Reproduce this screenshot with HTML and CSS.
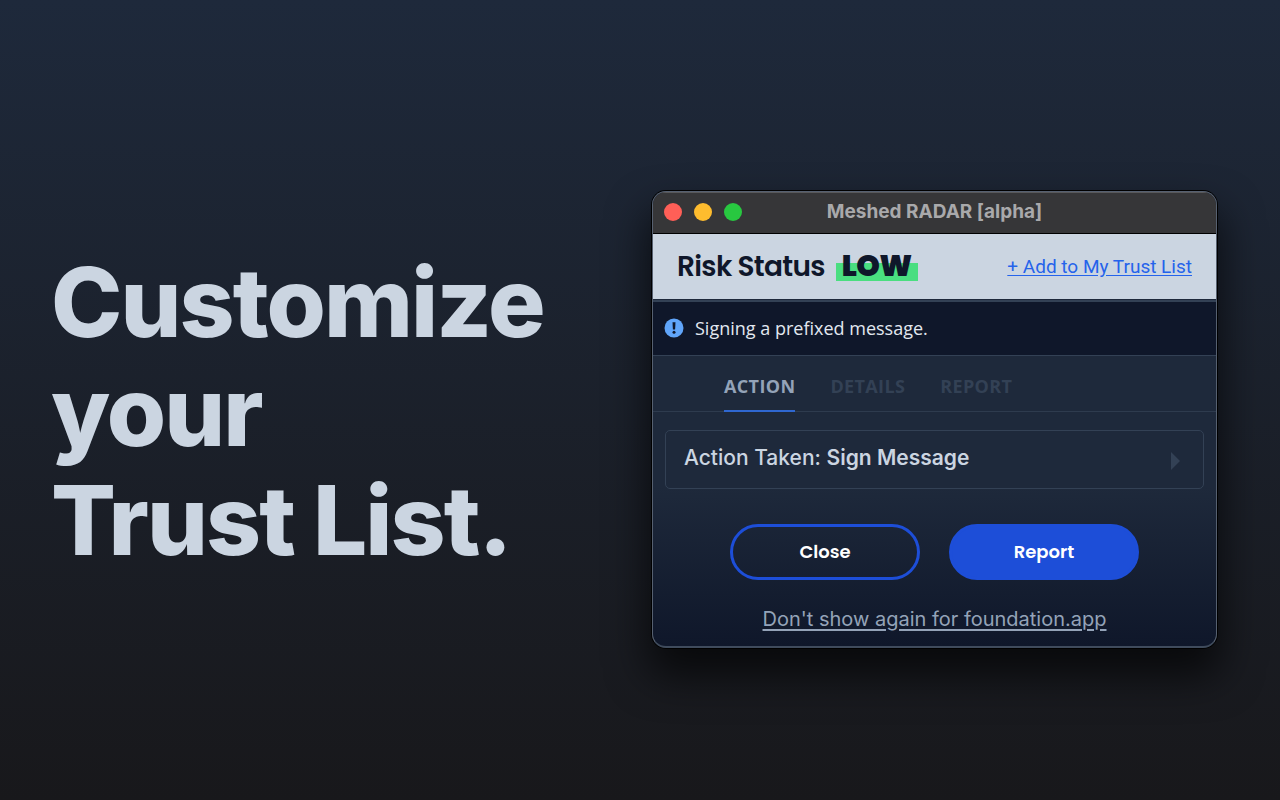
FILE: index.html
```html
<!DOCTYPE html>
<html lang="en">
<head>
<meta charset="utf-8">
<meta name="viewport" content="width=device-width, initial-scale=1">
<title>Meshed RADAR</title>
<link rel="stylesheet" href="styles.css">
</head>
<body>
<main class="hero">
  <h1 class="headline">Customize<br>your<br>Trust List.</h1>
  <section class="window" aria-label="Meshed RADAR">
    <header class="titlebar">
      <div class="lights"><span class="light red"></span><span class="light amber"></span><span class="light green"></span></div>
      <span class="title">Meshed RADAR [alpha]</span>
    </header>
    <div class="status">
      <h2 class="risk">Risk Status <strong class="level">LOW</strong></h2>
      <a class="trust" href="#trust">+ Add to My Trust List</a>
    </div>
    <p class="notice">
      <svg class="alert" viewBox="0 0 20 20" aria-hidden="true"><circle cx="10" cy="10" r="9.5" fill="#60a5fa"/><path d="M8.5 4.3h3l-.4 7.2H8.9z" fill="#0f172a"/><circle cx="10" cy="14.2" r="1.5" fill="#0f172a"/></svg>
      Signing a prefixed message.
    </p>
    <nav class="tabs">
      <a class="tab active" href="#action">ACTION</a>
      <a class="tab" href="#details">DETAILS</a>
      <a class="tab" href="#report">REPORT</a>
    </nav>
    <div class="content">
      <button class="card" type="button">
        <span>Action Taken: <b>Sign Message</b></span>
        <svg class="arrow" viewBox="0 0 9 18" aria-hidden="true"><path d="M0 0L9 9L0 18Z" fill="#334155"/></svg>
      </button>
      <div class="actions">
        <button class="btn outline" type="button">Close</button>
        <button class="btn" type="button">Report</button>
      </div>
      <a class="mute" href="#mute">Don't show again for foundation.app</a>
    </div>
  </section>
</main>
</body>
</html>
```
FILE: styles.css
```css
* { box-sizing: border-box; }
body {
  margin: 0;
  font-family: Inter, "Liberation Sans", sans-serif;
  color: #cbd5e1;
  background: #18181b;
}
.hero {
  min-height: 100vh;
  padding: 22px 63px 0 51px;
  display: flex;
  align-items: center;
  justify-content: space-between;
  gap: 32px;
  background: linear-gradient(#1e293b, #18181b);
}
.headline {
  margin: 0;
  font-size: 96px;
  line-height: 109px;
  font-weight: 800;
  letter-spacing: -0.02em;
}
.window {
  flex: 0 1 565px;
  margin-top: 16px;
  border: 1px solid #566070;
  border-bottom: 2px solid #3f4b5c;
  border-radius: 14px;
  overflow: hidden;
  background: linear-gradient(#1e293b 65%, #0f172a);
  box-shadow: 0 0 0 1px #000, 0 24px 40px 4px rgba(0, 0, 0, 0.65);
}
.titlebar {
  display: grid;
  grid-template-columns: 1fr auto 1fr;
  align-items: center;
  height: 42px;
  padding: 0 11px;
  background: #363638;
  border-bottom: 1px solid #000;
  box-shadow: inset 0 1px #59595b;
}
.lights { display: flex; gap: 12px; }
.light { width: 18px; height: 18px; border-radius: 50%; }
.red { background: #ff5f57; }
.amber { background: #febc2e; }
.green { background: #28c840; }
.title { font-size: 19px; line-height: 24px; font-weight: 700; color: #a9a9ab; }
.status {
  display: flex;
  align-items: center;
  justify-content: space-between;
  height: 66px;
  padding: 0 24px;
  background: #cbd5e1;
  border-bottom: 1px solid #1e293b;
}
.risk {
  margin: 0;
  padding-top: 2px;
  font-family: Poppins, Inter, sans-serif;
  font-size: 28px;
  line-height: 36px;
  font-weight: 600;
  letter-spacing: -0.025em;
  color: #0f172a;
}
.level {
  display: inline-block;
  margin-left: 5px;
  padding: 0 6px;
  font-size: 30px;
  line-height: 30px;
  font-weight: 900;
  background: linear-gradient(transparent 40%, #4ade80 40%);
}
.trust { font-family: Roboto, sans-serif; font-size: 19px; color: #2563eb; text-underline-offset: 2px; }
.notice {
  display: flex;
  align-items: center;
  gap: 11px;
  height: 56px;
  margin: 0;
  padding: 0 11px;
  font-family: "Open Sans", sans-serif;
  font-size: 18px;
  color: #e2e8f0;
  background: #0f172a;
  border-top: 2px solid #334155;
  border-bottom: 1px solid #334155;
}
.alert { width: 20px; height: 20px; }
.tabs {
  display: flex;
  gap: 35px;
  height: 56px;
  padding: 0 71px;
  font-family: "Open Sans", sans-serif;
  font-size: 18px;
  line-height: 60px;
  font-weight: 700;
  letter-spacing: 0.02em;
  border-bottom: 1px solid #2e3b4e;
}
.tab { height: 56px; color: #334155; text-decoration: none; }
.active { color: #94a3b8; border-bottom: 2px solid #2f67d0; }
.content {
  display: flex;
  flex-direction: column;
  align-items: center;
  padding: 18px 12px 13px;
}
.card {
  width: 100%;
  height: 59px;
  padding: 0 23px 4px 18px;
  display: flex;
  align-items: center;
  justify-content: space-between;
  font: 500 21px Inter, sans-serif;
  color: #cbd5e1;
  background: #1e293b;
  border: 1px solid #334155;
  border-radius: 5px;
}
.card b { font-weight: 600; }
.arrow { width: 9px; height: 18px; margin-top: 8px; }
.actions { display: flex; justify-content: center; gap: 29px; width: 100%; margin: 35px 0 25px; }
.btn {
  flex: 0 1 190px;
  height: 56px;
  padding: 0;
  font: 600 18px Poppins, Inter, sans-serif;
  color: #fff;
  background: #1d4ed8;
  border: 3px solid #1d4ed8;
  border-radius: 28px;
}
.outline { background: transparent; }
.mute { font-size: 20px; line-height: 28px; color: #94a3b8; text-underline-offset: 3px; }
```
